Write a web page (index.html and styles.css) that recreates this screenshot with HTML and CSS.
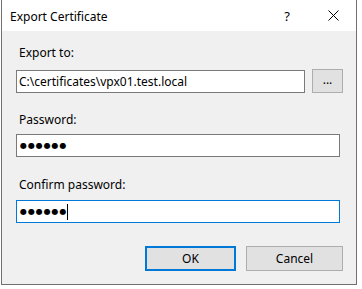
FILE: index.html
```html
<!DOCTYPE html>
<html>
<head>
  <meta charset="utf-8">
  <title>Export Certificate</title>
  <link rel="stylesheet" href="styles.css">
</head>
<body>
  <div class="dialog">
    <div class="titlebar">
      <span class="title">Export Certificate</span>
      <span class="caption-btn help">?</span>
      <span class="caption-btn close">
        <svg width="11" height="11" viewBox="0 0 11 11"><path d="M0.5 0.5 L10.5 10.5 M10.5 0.5 L0.5 10.5" stroke="#000" stroke-width="1" fill="none"/></svg>
      </span>
    </div>

    <div class="content">
      <div class="label first">Export to:</div>
      <div class="path-row">
        <div class="field path">C:\certificates\vpx01.test.local</div>
        <div class="btn browse">...</div>
      </div>

      <div class="label pass">Password:</div>
      <div class="field wide"><span class="dots">●●●●●●</span></div>

      <div class="label confirm">Confirm password:</div>
      <div class="field wide focused"><span class="dots">●●●●●●</span><span class="caret"></span></div>

      <div class="actions">
        <div class="btn ok">OK</div>
        <div class="btn cancel">Cancel</div>
      </div>
    </div>
  </div>
</body>
</html>
```

FILE: styles.css
```css
body {
  margin: 0;
  background-color: #ffffff;
  font-family: "Noto Sans", "Open Sans", sans-serif;
  font-size: 12px;
  color: #000;
}
.dialog {
  margin-left: 1px;
  width: 354px;
  height: 284px;
  border: 1px solid #707070;
  border-top: none;
  background-color: #f0f0f0;
}
.titlebar {
  height: 31px;
  background-color: #ffffff;
  display: flex;
  align-items: center;
}
.title {
  flex: 1;
  padding-left: 8px;
  padding-top: 1px;
}
.caption-btn {
  width: 46px;
  height: 31px;
  display: flex;
  align-items: center;
  justify-content: center;
}
.help {
  font-size: 13px;
  padding-left: 2px;
}
.close svg {
  display: block;
}
.content {
  padding: 14px 13px 0 14px;
}
.label {
  height: 16px;
  line-height: 16px;
  padding-left: 3px;
}
.label.first {
  margin-bottom: 8px;
}
.label.pass {
  margin-top: 19px;
  margin-bottom: 6px;
}
.label.confirm {
  margin-top: 20px;
  margin-bottom: 7px;
}
.path-row {
  display: flex;
  gap: 7px;
}
.field {
  box-sizing: border-box;
  height: 23px;
  border: 1px solid #7a7a7a;
  background-color: #fff;
  padding-left: 2px;
  line-height: 20px;
  display: flex;
  align-items: center;
}
.field.path {
  width: 289px;
  margin-top: 1px;
}
.field.wide {
  width: 324px;
}
.field.focused {
  border-color: #0078d7;
}
.dots {
  font-family: "DejaVu Sans", sans-serif;
  font-size: 8px;
  letter-spacing: 0.9px;
  padding-left: 1px;
}
.caret {
  width: 1px;
  height: 16px;
  background-color: #000;
}
.btn {
  box-sizing: border-box;
  height: 24px;
  border: 1px solid #adadad;
  background-color: #e1e1e1;
  display: flex;
  align-items: center;
  justify-content: center;
}
.browse {
  width: 31px;
  padding-bottom: 3px;
}
.actions {
  display: flex;
  justify-content: flex-end;
  gap: 10px;
  margin-top: 23px;
}
.actions .btn {
  height: 25px;
}
.ok {
  width: 91px;
  border: 2px solid #0078d7;
}
.cancel {
  width: 97px;
}
```
